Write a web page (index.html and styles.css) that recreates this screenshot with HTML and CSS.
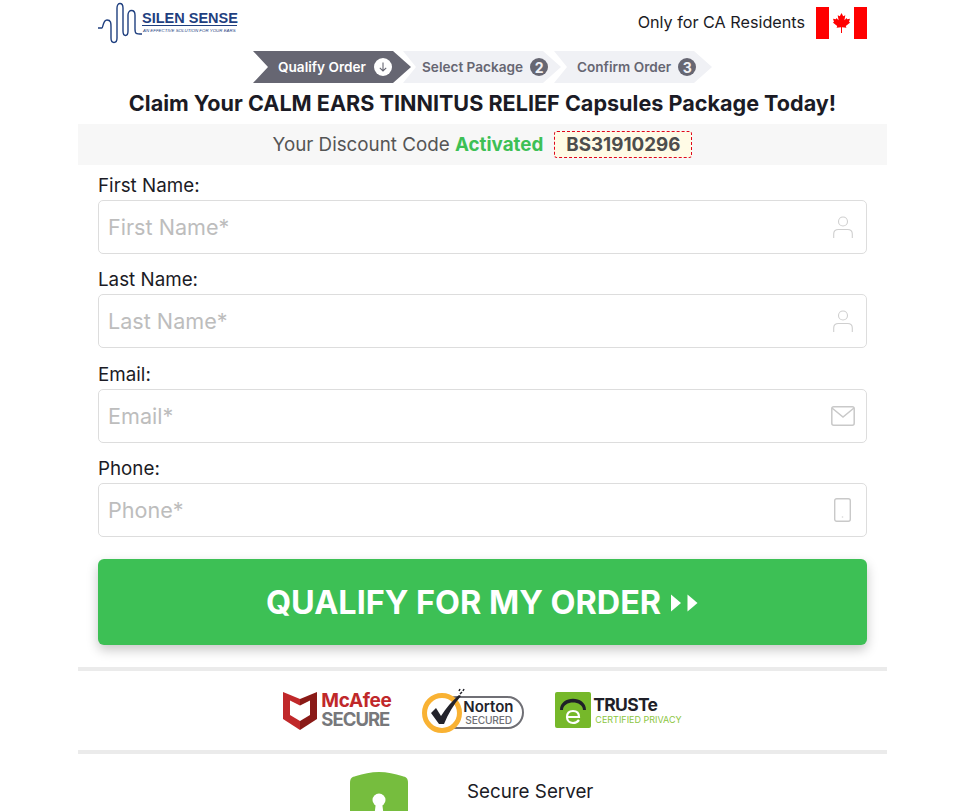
FILE: index.html
```html
<!DOCTYPE html>
<html lang="en">
<head>
  <meta charset="UTF-8" />
  <meta name="viewport" content="width=device-width, initial-scale=1" />
  <title>Claim Your Package | Silen Sense</title>
  <link rel="stylesheet" href="styles.css">
</head>
<body>
  <div class="page">

    <header class="top-bar">
      <div class="logo">
        <svg class="logo-wave" width="44" height="42" viewBox="0 0 44 42" fill="none" stroke="#1f3f7f" stroke-width="1.4">
          <path d="M0 25H4C5 25 5 17 9 17C13 17 13 20 13 24V35C13 41 19 41 19 35V5C19 -1 25 -1 25 5V28C25 34 30 34 30 28V12C30 6 37 6 37 12V26C37 31 38 31 44 31"/>
        </svg>
        <div class="logo-text">
          <div class="logo-name">SILEN SENSE</div>
          <div class="logo-tag">AN EFFECTIVE SOLUTION FOR YOUR EARS</div>
        </div>
      </div>
      <div class="residents">
        <span class="residents-text">Only for CA Residents</span>
        <svg class="flag" width="51" height="32" viewBox="0 0 51 32">
          <rect width="51" height="32" fill="#fff"/>
          <rect width="13" height="32" fill="#f00"/>
          <rect x="38" width="13" height="32" fill="#f00"/>
          <path d="M25.500 6L23.800 9.200L21.700 8.200L22.600 13.200L20.400 11.100L19.900 12.300L17 11.800L18 14.900L16.800 15.600L21.200 19L20.600 20.800L25 20.200L25 26H26L26 20.200L30.400 20.800L29.800 19L34.200 15.600L33 14.900L34 11.800L31.100 12.300L30.600 11.100L28.400 13.200L29.300 8.200L27.200 9.200Z" fill="#f00"/>
        </svg>
      </div>
    </header>

    <div class="steps">
      <div class="step step-active">
        <span>Qualify Order</span>
        <span class="step-icon">
          <svg width="10" height="10" viewBox="0 0 10 10" fill="none" stroke="#666672" stroke-width="1.100"><path d="M5 0.500V9M1.800 5.800L5 9L8.200 5.800"/></svg>
        </span>
      </div>
      <div class="step"><span>Select Package</span><span class="step-num">2</span></div>
      <div class="step step-last"><span>Confirm Order</span><span class="step-num">3</span></div>
    </div>

    <h1 class="title">Claim Your CALM EARS TINNITUS RELIEF Capsules Package Today!</h1>

    <div class="discount">
      <span>Your Discount Code <b class="activated">Activated</b></span>
      <span class="code">BS31910296</span>
    </div>

    <form class="qualify-form">
      <div class="field">
        <label for="first">First Name:</label>
        <div class="input-wrap">
          <input type="text" id="first" placeholder="First Name*">
          <svg class="input-icon icon-person" width="20" height="22" viewBox="0 0 20 22" fill="none" stroke="#cfcfcf" stroke-width="1.100"><circle cx="10" cy="5.500" r="4.500"/><path d="M0.700 22V18C0.700 15 3 13.500 5.500 13.500H14.500C17 13.500 19.300 15 19.300 18V22"/></svg>
        </div>
      </div>
      <div class="field">
        <label for="last">Last Name:</label>
        <div class="input-wrap">
          <input type="text" id="last" placeholder="Last Name*">
          <svg class="input-icon icon-person" width="20" height="22" viewBox="0 0 20 22" fill="none" stroke="#cfcfcf" stroke-width="1.100"><circle cx="10" cy="5.500" r="4.500"/><path d="M0.700 22V18C0.700 15 3 13.500 5.500 13.500H14.500C17 13.500 19.300 15 19.300 18V22"/></svg>
        </div>
      </div>
      <div class="field">
        <label for="email">Email:</label>
        <div class="input-wrap">
          <input type="email" id="email" placeholder="Email*">
          <svg class="input-icon" width="24" height="20" viewBox="0 0 24 20" fill="none" stroke="#c9c9c9" stroke-width="1.500"><rect x="0.800" y="0.800" width="22.400" height="18.400" rx="2"/><path d="M1 2L12 11L23 2"/></svg>
        </div>
      </div>
      <div class="field">
        <label for="phone">Phone:</label>
        <div class="input-wrap">
          <input type="tel" id="phone" placeholder="Phone*">
          <svg class="input-icon icon-phone" width="17" height="24" viewBox="0 0 17 24" fill="none" stroke="#c9c9c9" stroke-width="1.400"><rect x="0.700" y="0.700" width="15.600" height="22.600" rx="2"/><path d="M8.500 18.500V19.500"/></svg>
        </div>
      </div>
      <button type="button" class="submit-btn">
        QUALIFY FOR MY ORDER
        <svg width="28" height="20" viewBox="0 0 28 20" fill="#fff"><path d="M0 1.500L10 10L0 18.500Z"/><path d="M16.500 1.500L26.500 10L16.500 18.500Z"/></svg>
      </button>
    </form>

    <div class="badges">
      <div class="badge">
        <svg width="34" height="40" viewBox="0 0 34 40">
          <path d="M0 2L17 9V40L0 29Z" fill="#c0282a"/>
          <path d="M34 2L17 9V40L34 29Z" fill="#8a1a17"/>
          <path d="M7 10.500L17 15.500L27 10.500V25L17 31L7 25Z" fill="#fff"/>
        </svg>
        <div class="mcafee-text">
          <div class="mcafee-name">McAfee</div>
          <div class="mcafee-secure">SECURE</div>
        </div>
      </div>
      <div class="badge norton">
        <div class="norton-pill">
          <div class="norton-name">Norton</div>
          <div class="norton-sub">SECURED</div>
        </div>
        <svg class="norton-seal" width="46" height="45" viewBox="0 0 46 45">
          <circle cx="20" cy="25" r="17.500" fill="#fff" stroke="#f9b233" stroke-width="5"/>
          <path d="M9 25L14 20L19 28C24 20 30 13 37 7L39 8C32 16 26 26 22 36H17Z" fill="#23232b"/>
          <path d="M38 6L40 4M41 3L42 1M37 3L38 1" stroke="#23232b" stroke-width="1.500"/>
        </svg>
      </div>
      <div class="badge badge-truste">
        <svg width="36" height="36" viewBox="0 0 36 36">
          <rect width="36" height="36" rx="2" fill="#76b82a"/>
          <path d="M5 18C5 3 31 3 31 18H28C28 8 8 8 8 18Z" fill="#1f1f28"/>
          <path d="M12 25H24C24 21 22 19 18 19C14 19 12 21.500 12 25C12 29 15 31 18 31C20.500 31 22.500 30 24 28" fill="none" stroke="#fff" stroke-width="2.200"/>
        </svg>
        <div class="truste-text">
          <div class="truste-name">TRUSTe</div>
          <div class="truste-sub">CERTIFIED PRIVACY</div>
        </div>
      </div>
    </div>

    <div class="secure-row">
      <svg width="60" height="70" viewBox="0 0 60 70">
        <path d="M1 11C1 6 3 5 7 4C14 2 22 0 30 0C38 0 46 2 53 4C57 5 59 6 59 11V40C59 55 40 66 30 70C20 66 1 55 1 40Z" fill="#76bd3e"/>
        <circle cx="30" cy="28" r="6.500" fill="#fff"/>
        <path d="M27 30H33L35 46H25Z" fill="#fff"/>
      </svg>
      <div class="secure-text">Secure Server</div>
    </div>

  </div>
</body>
</html>
```

FILE: styles.css
```css
html, body {
  height: 811px;
  overflow: hidden;
}
body {
  font-family: 'Inter', sans-serif;
  background: #fff;
  margin: 0;
  padding: 0;
  color: #1b1b25;
}
.page {
  width: 809px;
  margin-left: 78px;
}
.top-bar {
  display: flex;
  justify-content: space-between;
  align-items: center;
  height: 47px;
  padding: 0 20px;
}
.logo {
  display: flex;
  align-items: flex-start;
  height: 47px;
  padding-top: 3px;
  box-sizing: border-box;
}
.logo-wave {
  overflow: visible;
}
.logo-text {
  margin-top: 9px;
  width: 95px;
}
.logo-name {
  font-family: 'Liberation Sans', sans-serif;
  font-weight: bold;
  font-size: 14.500px;
  line-height: 13px;
  color: #1f3f7f;
  border-bottom: 1px solid #1f3f7f;
  white-space: nowrap;
}
.logo-tag {
  font-family: 'Liberation Sans', sans-serif;
  font-style: italic;
  font-size: 4.400px;
  line-height: 9px;
  padding-left: 1px;
  color: #1f3f7f;
  white-space: nowrap;
}
.residents {
  display: flex;
  align-items: center;
  gap: 11px;
  font-size: 16.200px;
  margin-top: -1px;
}
.residents-text {
  margin-bottom: 2px;
}
.steps {
  display: flex;
  justify-content: center;
  height: 32px;
  margin-top: 4px;
}
.step {
  display: flex;
  align-items: center;
  gap: 7px;
  width: 158px;
  height: 32px;
  box-sizing: border-box;
  padding-left: 19px;
  margin-right: -7px;
  font-size: 13.600px;
  font-weight: 600;
  white-space: nowrap;
  color: #666672;
  background: #f0f1f5;
  clip-path: polygon(0 0, calc(100% - 18px) 0, 100% 50%, calc(100% - 18px) 100%, 0 100%, 13px 50%);
}
.step-active {
  background: #666672;
  color: #fff;
  gap: 8px;
  padding-left: 25px;
  margin-right: -8px;
  z-index: 1;
  clip-path: polygon(0 0, calc(100% - 18px) 0, 100% 50%, calc(100% - 18px) 100%, 0 100%, 15px 50%);
}
.step-last {
  padding-left: 23px;
  margin-right: 0;
}
.step-icon,
.step-num {
  display: flex;
  align-items: center;
  justify-content: center;
  width: 18px;
  height: 18px;
  border-radius: 50%;
}
.step-icon {
  background: #fff;
}
.step-num {
  background: #666672;
  color: #f0f1f5;
  font-size: 14px;
  font-weight: 700;
}
.title {
  margin: 7px 0 0;
  font-size: 21.600px;
  line-height: 27px;
  font-weight: 700;
  text-align: center;
  color: #1b1b25;
}
.discount {
  display: flex;
  justify-content: center;
  align-items: center;
  gap: 11px;
  height: 41px;
  margin-top: 7px;
  background: #f7f7f7;
  font-size: 18.800px;
  color: #555;
}
.activated {
  color: #3dc055;
  font-weight: 700;
}
.code {
  padding: 0 11px;
  height: 27px;
  box-sizing: border-box;
  line-height: 25px;
  background: #fffbe6;
  border: 1px dashed #e0061b;
  border-radius: 3px;
  font-weight: 700;
  color: #4d4d4d;
}
.qualify-form {
  padding: 9px 20px 0;
}
.field {
  margin-bottom: 14.330px;
}
.field label {
  display: block;
  margin-bottom: 2px;
  font-size: 18.800px;
  line-height: 24px;
  color: #1b1b25;
}
.input-wrap {
  position: relative;
}
.input-wrap input {
  display: block;
  width: 100%;
  height: 54px;
  box-sizing: border-box;
  padding: 0 60px 0 9px;
  border: 1px solid #ddd;
  border-radius: 5px;
  font-family: 'Inter', sans-serif;
  font-size: 21.600px;
  background: #fff;
}
.input-wrap input::placeholder {
  color: #bdbdbd;
  opacity: 1;
}
.input-icon {
  position: absolute;
  right: 12px;
  top: 17px;
}
.icon-person {
  right: 14px;
  top: 16px;
}
.icon-phone {
  right: 16px;
  top: 15px;
}
.submit-btn {
  display: flex;
  align-items: center;
  justify-content: center;
  gap: 10px;
  width: 100%;
  height: 86px;
  margin-top: 22px;
  padding: 2px 0 0;
  border: none;
  border-radius: 6px;
  background: #3dc055;
  color: #fff;
  font-family: 'Inter', sans-serif;
  font-size: 32.400px;
  font-weight: 700;
  box-shadow: 0 5px 12px rgba(0,0,0,0.22);
  cursor: pointer;
}
.badges {
  display: flex;
  justify-content: center;
  align-items: center;
  gap: 31px;
  height: 79px;
  margin-top: 22px;
  border-top: 4px solid #ebebeb;
  border-bottom: 4px solid #ebebeb;
}
.badge {
  display: flex;
  align-items: center;
  gap: 4px;
}
.badge-truste {
  gap: 2px;
}
.mcafee-text {
  width: 70px;
  font-weight: 700;
}
.mcafee-name {
  font-size: 19px;
  line-height: 19px;
  letter-spacing: -0.3px;
  color: #c0282a;
}
.mcafee-secure {
  font-size: 18.500px;
  line-height: 19px;
  letter-spacing: -1px;
  color: #77787b;
}
.norton {
  position: relative;
  width: 102px;
  height: 45px;
}
.norton-pill {
  position: absolute;
  right: 0;
  bottom: 4px;
  width: 84px;
  height: 33px;
  box-sizing: border-box;
  border: 2px solid #6f6f75;
  border-radius: 17px;
  padding: 1px 0 0 21px;
  background: #fff;
}
.norton-name {
  font-size: 15px;
  font-weight: 600;
  line-height: 16px;
  color: #23232b;
}
.norton-sub {
  padding-left: 2px;
  font-size: 10.200px;
  font-weight: 500;
  line-height: 11px;
  letter-spacing: -0.2px;
  color: #6f6f75;
}
.norton-seal {
  position: absolute;
  left: 0;
  top: 0;
}
.truste-name {
  font-size: 17.500px;
  font-weight: 700;
  line-height: 18px;
  letter-spacing: -0.7px;
  color: #1f1f28;
}
.truste-sub {
  padding-left: 2px;
  font-size: 9px;
  font-weight: 400;
  line-height: 11px;
  color: #8cc63f;
  white-space: nowrap;
}
.secure-row {
  display: flex;
  align-items: flex-start;
  gap: 58px;
  margin-top: 18px;
  padding-left: 271px;
}
.secure-text {
  font-size: 18.800px;
  line-height: 24px;
  margin-top: 8px;
}
```
